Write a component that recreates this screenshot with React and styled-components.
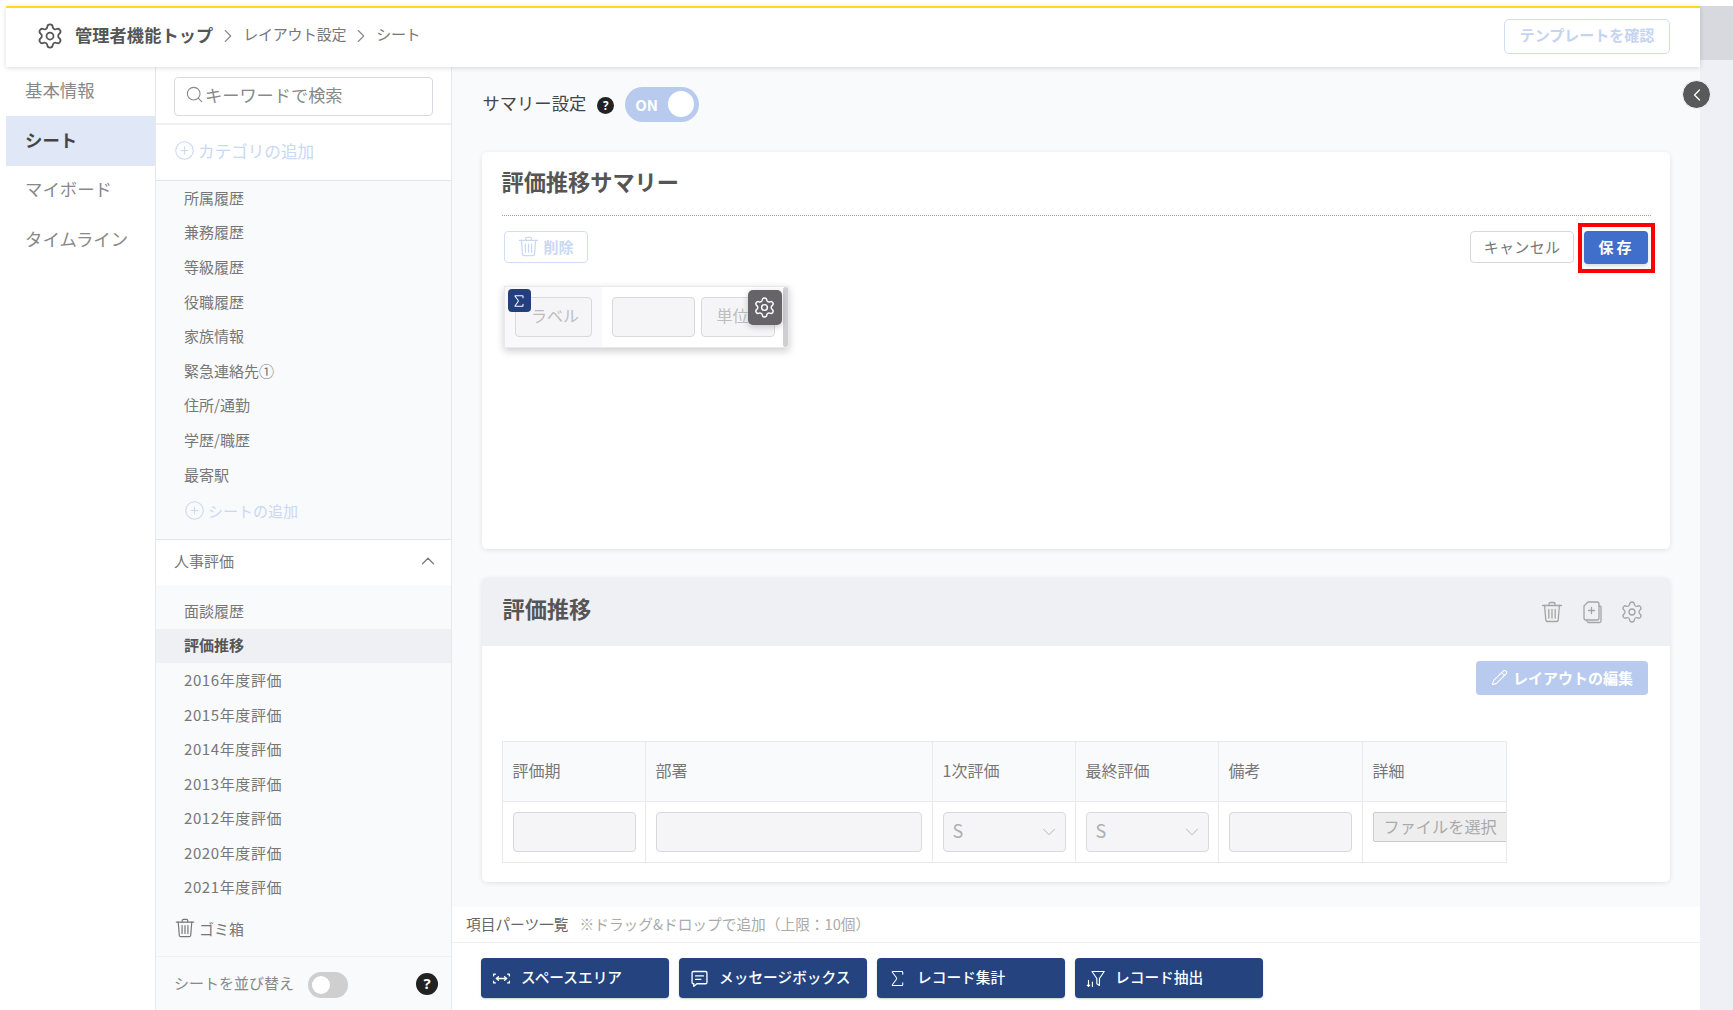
import React from "react";
import styled, { createGlobalStyle } from "styled-components";
import { Settings, ChevronRight, ChevronLeft, ChevronUp, ChevronDown, Search, CirclePlus, Pencil, Sigma } from "lucide-react";

const Global = createGlobalStyle`
  html, body { margin: 0; padding: 0; background: #fff; }
  body { font-family: "Noto Sans CJK JP", "Noto Sans", sans-serif; color: #666; }
  * { box-sizing: border-box; }
`;

const Page = styled.div`
  width: 1733px; height: 1010px; display: flex; overflow: hidden; padding-top: 5.5px; padding-left: 6px; background: #fff;
`;
const Frame = styled.div`
  width: 1694px; display: flex; flex-direction: column; height: 100%; position: relative;
`;
const Rail = styled.div`
  width: 33px; display: flex; flex-direction: column; background: #eff0f5;
`;
const RailTop = styled.div`
  height: 54.5px; background: #d8d9de;
`;
const Header = styled.header`
  height: 61.5px; flex: none; border-top: 2px solid #fcdb1e; background: #fff; display: flex; align-items: center;
  padding: 0 30px 3px 30px; box-shadow: 0 1px 5px rgba(0,0,0,.14); position: relative; z-index: 3;
`;
const Crumbs = styled.nav`
  display: flex; align-items: center; flex: 1; color: #777; font-size: 15px; letter-spacing: -.3px;
`;
const CrumbTop = styled.strong`
  font-size: 17.2px; font-weight: 700; color: #555; margin: -2px 0 0 11px; letter-spacing: .1px;
`;
const CrumbSep = styled.span`
  display: inline-flex; margin: 1px 4px 0 4px; color: #888;
`;
const CrumbText = styled.span`
  margin-top: -4px;
`;
const TemplateBtn = styled.button`
  width: 166px; height: 35px; margin-top: 2px; background: #fff; border: 1.5px solid #cddbf4; border-radius: 5px; color: #c5d4f0;
  font: 700 15px "Noto Sans CJK JP", sans-serif; padding: 0 0 4px;
`;
const Body = styled.div`
  flex: 1; min-height: 0; display: flex;
`;
const Nav = styled.nav`
  width: 149px; flex: none; background: #fff; display: flex; flex-direction: column; margin-top: -1px;
`;
const NavItem = styled.div`
  height: ${p => (p.$active ? 50 : 49.5)}px; display: flex; align-items: center; padding: 0 0 3px 19px; font-size: 17.4px;
  color: ${p => (p.$active ? "#444" : "#888")}; font-weight: ${p => (p.$active ? 700 : 400)};
  background: ${p => (p.$active ? "#e0e7f6" : "transparent")};
`;
const Side = styled.aside`
  width: 297px; flex: none; display: flex; flex-direction: column; background: #f9fafc;
  border-left: 1.5px solid #e7e8ec; border-right: 1.5px solid #e7e8ec;
`;
const SearchBox = styled.div`
  height: 58px; flex: none; padding: 10px 18px 0 18px; background: #fff; border-bottom: 2px solid #eff0f4;
`;
const SearchField = styled.div`
  height: 39px; border: 1px solid #d9dadf; border-radius: 4px; display: flex; align-items: center; padding: 0 0 4px 10px; gap: 1px;
  font-size: 17.2px; color: #888; background: #fff;
`;
const CatAdd = styled.div`
  height: 56px; flex: none; background: #fff; border-bottom: 1.5px solid #e3e4e8; display: flex; align-items: center; gap: 3px;
  padding: 0 0 4px 18px; color: #c9d8f3; font-size: 16.6px;
`;
const SheetList = styled.div`
  padding-bottom: ${p => p.$pb || 0}px; padding-top: ${p => p.$pt || 0}px; flex: none;
`;
const SheetItem = styled.div`
  height: 34.6px; display: flex; align-items: center; padding: 0 0 2px 28px; font-size: 15px;
  letter-spacing: ${p => (p.$digits ? ".6px" : "0")};
  color: ${p => (p.$active ? "#555" : "#777")}; font-weight: ${p => (p.$active ? 700 : 400)};
  background: ${p => (p.$active ? "#eff0f4" : "transparent")};
`;
const AddSheet = styled(SheetItem)`
  color: #c9d8f3; gap: 3px; padding: 2px 0 0 28px;
`;
const Group = styled.div`
  height: 46px; flex: none; background: #fff; border-top: 1.5px solid #e3e4e8; display: flex; align-items: center;
  justify-content: space-between; padding: 0 12px 3px 18px; font-size: 15px; color: #777;
`;
const Trash2Row = styled.div`
  margin-top: 7px; height: 34px; display: flex; align-items: center; gap: 3px; padding: 0 0 2px 18px; font-size: 15px; color: #777;
`;
const SortBar = styled.div`
  margin-top: auto; height: 54px; flex: none; border-top: 1.5px solid #eff0f4; display: flex; align-items: center;
  padding: 0 13px 2px 18px; font-size: 15px; color: #888;
`;
const SmallToggle = styled.div`
  width: 40px; height: 26px; border-radius: 13px; background: #cfcfcf; margin: 4px auto 0 14px; padding: 4px; display: flex;
`;
const Knob = styled.span`
  width: 18px; height: 18px; border-radius: 50%; background: #fff; display: block;
`;
const Help = styled.span`
  width: ${p => p.$s}px; height: ${p => p.$s}px; border-radius: 50%; background: #222; color: #fff; font-weight: 700;
  font-size: ${p => p.$s * 0.68}px; line-height: 1; display: inline-flex; align-items: center; justify-content: center;
  font-family: "Noto Sans", sans-serif; flex: none; margin: ${p => p.$m || "0"};
`;
const Main = styled.main`
  flex: 1; min-width: 0; background: #f9fafc; display: flex; flex-direction: column; position: relative;
`;
const Content = styled.div`
  flex: 1; padding: 19px 30px 0 29.5px; display: flex; flex-direction: column;
`;
const SummaryRow = styled.div`
  height: 36px; flex: none; display: flex; align-items: center; font-size: 17.3px; color: #444; padding-left: 1px;
`;
const SummaryLabel = styled.span`
  margin-top: -4px;
`;
const BigToggle = styled.div`
  width: 74px; height: 35px; border-radius: 18px; background: #b8cbee; margin-left: 11px; display: flex; align-items: center;
  justify-content: space-between; padding: 0 5px 0 10px; color: #fff; font-weight: 700; font-size: 15px;
`;
const BigKnob = styled.span`
  width: 26px; height: 26px; border-radius: 50%; background: #fff;
`;
const Card = styled.section`
  flex: none; height: ${p => p.$h}px; margin-top: ${p => p.$mt}px; background: #fff; border-radius: 5px;
  box-shadow: 0 1px 5px rgba(0,0,0,.1); padding: ${p => p.$pad || "0"}; overflow: hidden;
`;
const CardTitle = styled.h2`
  margin: 0; font-size: 22.2px; font-weight: 700; color: #555; line-height: 1; letter-spacing: 0;
`;
const TitleRule = styled.div`
  height: 64px; border-bottom: 1px dotted #9d9d9d; display: flex; align-items: center; padding-bottom: 4px;
`;
const Actions = styled.div`
  display: flex; justify-content: space-between; margin-top: 15px; padding: 0 3px 0 2px;
`;
const DeleteBtn = styled.button`
  width: 84px; height: 32px; border: 1.5px solid #d1dff6; border-radius: 4px; background: #fff; color: #c9d8f3; padding: 0 0 2px 0;
  display: flex; align-items: center; justify-content: center; gap: 3px; font: 700 15px "Noto Sans CJK JP", sans-serif;
`;
const RightActions = styled.div`
  display: flex; gap: 10px;
`;
const CancelBtn = styled.button`
  width: 104px; height: 32px; border: 1px solid #d8d8d8; border-radius: 4px; background: #fff; color: #777; padding: 0 0 2px;
  font: 400 15px "Noto Sans CJK JP", sans-serif; letter-spacing: .3px;
`;
const SaveBtn = styled.button`
  width: 64px; height: 33px; border: 0; border-radius: 4px; background: #3f6ecb; color: #fff; padding: 0 0 2px 1px; position: relative;
  font: 700 15px "Noto Sans CJK JP", sans-serif; letter-spacing: 3px; box-shadow: 0 2px 4px rgba(0,0,0,.15);
  &::after { content: ""; position: absolute; left: -6px; right: -7px; top: -8px; bottom: -9px; border: 4px solid #f00; }
`;
const Widget = styled.div`
  position: relative; width: 285px; height: 62px; margin: 22px 0 0 2px; background: #fff; border: 1px solid #e9e9ec; display: flex;
  box-shadow: 0 3px 8px rgba(0,0,0,.2);
`;
const WidgetLeft = styled.div`
  width: 97px; background: #f9f9fb; padding: 10px 0 0 10px; flex: none;
`;
const WidgetField = styled.div`
  width: ${p => p.$w}px; height: 40px; margin: ${p => p.$m}; background: #f5f5f7; border: 1px solid #d9d9db; border-radius: 4px;
  display: flex; align-items: center; justify-content: center; color: #bdbdbd; font-size: 16px; padding: ${p => p.$pad || "0"};
`;
const WidgetScroll = styled.div`
  width: 5px; margin: 0 0 0 auto; background: #cfcfd1; border-radius: 3px;
`;
const SigmaBadge = styled.div`
  position: absolute; left: 3px; top: 2px; width: 23px; height: 23px; background: #243f7d; border-radius: 4px; color: #fff;
  display: flex; align-items: center; justify-content: center;
`;
const GearBadge = styled.div`
  position: absolute; left: 243px; top: 3px; width: 34px; height: 35px; background: #666468; border-radius: 5px; color: #fff;
  display: flex; align-items: center; justify-content: center; box-shadow: 0 2px 6px rgba(0,0,0,.2);
`;
const Card2Head = styled.div`
  height: 68px; background: #eff0f4; display: flex; align-items: center; justify-content: space-between; padding: 0 26px 8px 21px;
`;
const IconRow = styled.div`
  display: flex; align-items: center; gap: 16px; color: #a4a4a4; margin-top: 7px;
`;
const EditRow = styled.div`
  display: flex; justify-content: flex-end; padding: 15px 22px 0 0;
`;
const EditBtn = styled.button`
  width: 172px; height: 34px; border: 0; border-radius: 4px; background: #b8caed; color: #fff; padding: 0 0 1px;
  font: 700 15px "Noto Sans CJK JP", sans-serif; display: flex; align-items: center; justify-content: center; gap: 5px;
`;
const Table = styled.table`
  margin: 46px 0 0 20px; border-collapse: collapse; table-layout: fixed; width: 1004px;
`;
const Th = styled.th`
  width: ${p => p.$w}px; height: 60px; background: #f9fafc; border: 1px solid #e8e9ed; text-align: left; padding: 0 10px 4px;
  font-size: 16px; font-weight: 400; color: #777;
`;
const Td = styled.td`
  height: 61px; border: 1px solid #e8e9ed; padding: 10px 0 0 10px; vertical-align: top; overflow: hidden;
`;
const Field = styled.div`
  width: 123px; height: 40px; flex: none; background: #f5f5f7; border: 1px solid #d9d9db; border-radius: 4px; display: flex;
  align-items: center; justify-content: space-between; padding: 0 5px 5px 9px; color: #b0b0b0; font-size: 18px;
  svg { margin-top: 5px; }
`;
const WideField = styled(Field)`
  width: 266px;
`;
const FileBtn = styled.div`
  width: 150px; height: 30px; background: #eee; border: 1px solid #cdcdcd; border-radius: 2px; color: #aaa; font-size: 16.2px;
  display: flex; align-items: center; padding: 0 0 2px 10px; white-space: nowrap;
`;
const Parts = styled.div`
  height: 103px; flex: none; background: #fff; display: flex; flex-direction: column;
`;
const PartsHead = styled.div`
  height: 36px; flex: none; border-bottom: 1.5px solid #eff0f4; display: flex; align-items: center; padding: 0 0 2px 14px; gap: 11px;
  font-size: 14.7px; color: #666;
`;
const PartsNote = styled.span`
  color: #aaa;
`;
const PartsButtons = styled.div`
  display: flex; gap: 10px; padding: 15px 0 0 29px;
`;
const PartBtn = styled.button`
  width: 188px; height: 40px; border: 0; border-radius: 4px; background: #24437f; color: #fff; padding: 0 0 3px 10px;
  display: flex; align-items: center; gap: 9px; font: 500 14.7px "Noto Sans CJK JP", sans-serif; box-shadow: 0 1px 2px rgba(0,0,0,.2);
  svg { margin-top: 3px; }
`;
const Collapse = styled.button`
  position: absolute; right: -11px; top: 13px; width: 29px; height: 29px; border-radius: 50%; background: #58595b; border: 1px solid #fff;
  color: #fff; display: flex; align-items: center; justify-content: center; padding: 0; z-index: 4;
`;

const TrashIcon = ({ s = 20, w = 1.3 }) => (
  <svg width={s} height={s} viewBox="0 0 24 24" fill="none" stroke="currentColor" strokeWidth={w} strokeLinecap="round" strokeLinejoin="round">
    <path d="M2.5 5.5h19" />
    <path d="M9 5.5V3.8A1.3 1.3 0 0 1 10.3 2.5h3.4A1.3 1.3 0 0 1 15 3.8v1.7" />
    <path d="M4.6 5.5l1.2 14.7a1.5 1.5 0 0 0 1.5 1.3h9.4a1.5 1.5 0 0 0 1.5-1.3l1.2-14.7" />
    <path d="M8.8 9.5v8.5M12 9.5v8.5M15.2 9.5v8.5" />
  </svg>
);
const CopyIcon = () => (
  <svg width="24" height="24" viewBox="0 0 24 24" fill="none" stroke="currentColor" strokeWidth="1.3" strokeLinecap="round" strokeLinejoin="round">
    <path d="M8 2h9a2 2 0 0 1 2 2v14a2 2 0 0 1-2 2H6a2 2 0 0 1-2-2V6z" />
    <path d="M19 6h.5a1.5 1.5 0 0 1 1.5 1.5V21a1.5 1.5 0 0 1-1.5 1.5H8.5A1.5 1.5 0 0 1 7 21v-1" />
    <path d="M11.5 7.5v6M8.5 10.5h6" />
  </svg>
);
const SpaceIcon = () => (
  <svg width="21" height="21" viewBox="0 0 24 24" fill="none" stroke="#fff" strokeWidth="1.5" strokeLinecap="round" strokeLinejoin="round">
    <path d="M5 7H3v2M3 15v2h2M19 7h2v2M21 15v2h-2" />
    <path d="M6 12h12M8.5 10 6 12l2.500 2M15.500 10 18 12l-2.500 2" />
  </svg>
);
const MessageIcon = () => (
  <svg width="21" height="21" viewBox="0 0 24 24" fill="none" stroke="#fff" strokeWidth="1.5" strokeLinecap="round" strokeLinejoin="round">
    <path d="M3.5 5.5a1.5 1.5 0 0 1 1.5-1.5h14a1.5 1.5 0 0 1 1.5 1.5v11a1.5 1.5 0 0 1-1.5 1.5H9l-3.5 3V18H5a1.5 1.5 0 0 1-1.5-1.5z" />
    <path d="M7.5 9h9M7.5 13h6" />
  </svg>
);
const FilterIcon = () => (
  <svg width="21" height="21" viewBox="0 0 24 24" fill="none" stroke="#fff" strokeWidth="1.3" strokeLinecap="round" strokeLinejoin="round">
    <path d="M8 4h14l-5.500 8v8l-3-2v-6z" />
    <path d="M4 14v7M2.500 19.500l1.500 1.500 1.500-1.500M8.500 21v-5" />
  </svg>
);

const sheets1 = ["所属履歴", "兼務履歴", "等級履歴", "役職履歴", "家族情報", "緊急連絡先①", "住所/通勤", "学歴/職歴", "最寄駅"];
const sheets2 = ["2016年度評価", "2015年度評価", "2014年度評価", "2013年度評価", "2012年度評価", "2020年度評価", "2021年度評価"];

export default function App() {
  return (
    <Page>
      <Global />
      <Frame>
        <Header>
          <Crumbs>
            <Settings size={28} strokeWidth={1.5} color="#555" />
            <CrumbTop>管理者機能トップ</CrumbTop>
            <CrumbSep><ChevronRight size={22} strokeWidth={1.2} /></CrumbSep>
            <CrumbText>レイアウト設定</CrumbText>
            <CrumbSep><ChevronRight size={22} strokeWidth={1.2} /></CrumbSep>
            <CrumbText>シート</CrumbText>
          </Crumbs>
          <TemplateBtn>テンプレートを確認</TemplateBtn>
        </Header>
        <Body>
          <Nav>
            <NavItem>基本情報</NavItem>
            <NavItem $active>シート</NavItem>
            <NavItem>マイボード</NavItem>
            <NavItem>タイムライン</NavItem>
          </Nav>
          <Side>
            <SearchBox>
              <SearchField><Search size={19} strokeWidth={1.4} />キーワードで検索</SearchField>
            </SearchBox>
            <CatAdd><CirclePlus size={21} strokeWidth={1.2} />カテゴリの追加</CatAdd>
            <SheetList $pb={12}>
              {sheets1.map(s => <SheetItem key={s}>{s}</SheetItem>)}
              <AddSheet><CirclePlus size={21} strokeWidth={1.2} />シートの追加</AddSheet>
            </SheetList>
            <Group>人事評価<ChevronUp size={22} strokeWidth={1.3} /></Group>
            <SheetList $pt={9}>
              <SheetItem>面談履歴</SheetItem>
              <SheetItem $active>評価推移</SheetItem>
              {sheets2.map(s => <SheetItem key={s} $digits>{s}</SheetItem>)}
            </SheetList>
            <Trash2Row><TrashIcon s={22} />ゴミ箱</Trash2Row>
            <SortBar>
              シートを並び替え
              <SmallToggle><Knob /></SmallToggle>
              <Help $s={22} $m="2px 0 0 0">?</Help>
            </SortBar>
          </Side>
          <Main>
            <Collapse><ChevronLeft size={20} strokeWidth={1.5} /></Collapse>
            <Content>
              <SummaryRow>
                <SummaryLabel>サマリー設定</SummaryLabel>
                <Help $s={17} $m="3px 0 0 11px">?</Help>
                <BigToggle>ON<BigKnob /></BigToggle>
              </SummaryRow>
              <Card $h={397} $mt={30} $pad="0 19px 0 20px">
                <TitleRule><CardTitle>評価推移サマリー</CardTitle></TitleRule>
                <Actions>
                  <DeleteBtn><TrashIcon s={23} />削除</DeleteBtn>
                  <RightActions>
                    <CancelBtn>キャンセル</CancelBtn>
                    <SaveBtn>保存</SaveBtn>
                  </RightActions>
                </Actions>
                <Widget>
                  <WidgetLeft><WidgetField $w={77} $m="0" $pad="0 0 4px 4px">ラベル</WidgetField></WidgetLeft>
                  <WidgetField $w={83} $m="10px 0 0 10px" />
                  <WidgetField $w={74} $m="10px 0 0 6px" $pad="0 10px 4px 0">単位</WidgetField>
                  <WidgetScroll />
                  <SigmaBadge><Sigma size={16} strokeWidth={1.6} /></SigmaBadge>
                  <GearBadge><Settings size={23} strokeWidth={1.5} /></GearBadge>
                </Widget>
              </Card>
              <Card $h={304} $mt={29}>
                <Card2Head>
                  <CardTitle>評価推移</CardTitle>
                  <IconRow>
                    <TrashIcon s={24} />
                    <CopyIcon />
                    <Settings size={24} strokeWidth={1.3} />
                  </IconRow>
                </Card2Head>
                <EditRow>
                  <EditBtn><Pencil size={17} strokeWidth={1.5} />レイアウトの編集</EditBtn>
                </EditRow>
                <Table>
                  <thead>
                    <tr>
                      <Th $w={143}>評価期</Th>
                      <Th $w={287}>部署</Th>
                      <Th $w={143}>1次評価</Th>
                      <Th $w={143}>最終評価</Th>
                      <Th $w={144}>備考</Th>
                      <Th $w={144}>詳細</Th>
                    </tr>
                  </thead>
                  <tbody>
                    <tr>
                      <Td><Field /></Td>
                      <Td><WideField /></Td>
                      <Td><Field>S<ChevronDown size={22} strokeWidth={1} /></Field></Td>
                      <Td><Field>S<ChevronDown size={22} strokeWidth={1} /></Field></Td>
                      <Td><Field /></Td>
                      <Td><FileBtn>ファイルを選択</FileBtn></Td>
                    </tr>
                  </tbody>
                </Table>
              </Card>
            </Content>
            <Parts>
              <PartsHead>
                <span>項目パーツ一覧</span>
                <PartsNote>※ドラッグ&amp;ドロップで追加（上限：10個）</PartsNote>
              </PartsHead>
              <PartsButtons>
                <PartBtn><SpaceIcon />スペースエリア</PartBtn>
                <PartBtn><MessageIcon />メッセージボックス</PartBtn>
                <PartBtn><Sigma size={21} strokeWidth={1.2} />レコード集計</PartBtn>
                <PartBtn><FilterIcon />レコード抽出</PartBtn>
              </PartsButtons>
            </Parts>
          </Main>
        </Body>
      </Frame>
      <Rail><RailTop /></Rail>
    </Page>
  );
}
